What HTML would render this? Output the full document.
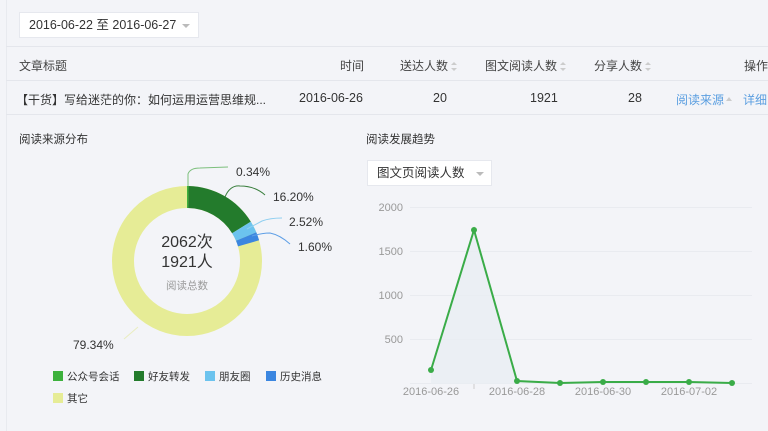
<!DOCTYPE html>
<html><head><meta charset="utf-8"><style>
*{margin:0;padding:0;box-sizing:border-box}
body{width:768px;height:431px;overflow:hidden;background:#f3f4f8;font-family:"Liberation Sans","Noto Sans CJK SC",sans-serif;color:#333;position:relative;font-size:12px}
.abs{position:absolute;white-space:nowrap}
.sel{position:absolute;background:#fff;border:1px solid #e6e8ee;height:26px;line-height:24px;padding-left:9px;font-size:12.5px;color:#333}
.caret{position:absolute;width:0;height:0;border-left:4px solid transparent;border-right:4px solid transparent;border-top:4px solid #bbb}
.line{position:absolute;left:6px;right:0;height:1px;background:#e4e6ec}
.th{color:#444;font-size:12px}
.sort{display:inline-block;vertical-align:middle;margin-left:3px;width:6px;height:9px;position:relative}
.sort:before{content:"";position:absolute;top:0;left:0;border-left:3px solid transparent;border-right:3px solid transparent;border-bottom:3px solid #ccc}
.sort:after{content:"";position:absolute;bottom:0;left:0;border-left:3px solid transparent;border-right:3px solid transparent;border-top:3px solid #ccc}
</style></head><body>
<div style="position:absolute;left:6px;top:0;width:1px;height:431px;background:#e8eaef"></div>
<div class="sel" style="left:19px;top:12px;width:180px">2016-06-22 至 2016-06-27</div>
<div class="caret" style="left:182px;top:24px"></div>
<div class="line" style="top:46px"></div>
<div class="abs th" style="left:19px;top:57px">文章标题</div>
<div class="abs th" style="left:340px;top:57px">时间</div>
<div class="abs th" style="left:400px;top:57px">送达人数<span class="sort"></span></div>
<div class="abs th" style="left:485px;top:57px">图文阅读人数<span class="sort"></span></div>
<div class="abs th" style="left:594px;top:57px">分享人数<span class="sort"></span></div>
<div class="abs th" style="left:744px;top:57px">操作</div>
<div class="line" style="top:80px"></div>
<div class="abs" style="left:16px;top:91px;font-size:12px">【干货】写给迷茫的你：如何运用运营思维规...</div>
<div class="abs" style="left:299px;top:91px;font-size:12.5px">2016-06-26</div>
<div class="abs" style="left:433px;top:91px;font-size:12.5px">20</div>
<div class="abs" style="left:530px;top:91px;font-size:12.5px">1921</div>
<div class="abs" style="left:628px;top:91px;font-size:12.5px">28</div>
<div class="abs" style="left:676px;top:91px;font-size:12px;color:#5a9ee0">阅读来源</div>
<div class="abs" style="left:726px;top:97px;border-left:3px solid transparent;border-right:3px solid transparent;border-bottom:4px solid #ccc"></div>
<div class="abs" style="left:743px;top:91px;font-size:12px;color:#5a9ee0">详细</div>
<div class="line" style="top:114px"></div>

<div class="abs" style="left:19px;top:131px;font-size:11.5px">阅读来源分布</div>
<div class="abs" style="left:366px;top:131px;font-size:11.5px">阅读发展趋势</div>

<svg style="position:absolute;left:0;top:0" width="768" height="431">
<g transform="translate(187,261)">
<circle r="64" fill="none" stroke="#e6ec96" stroke-width="22"/>
<path d="M0,-75 A75,75 0 0 1 1.6,-75 L1.13,-53 A53,53 0 0 0 0,-53Z" fill="#3db13d"/>
<path d="M1.6,-75 A75,75 0 0 1 63.8,-39.4 L45.1,-27.8 A53,53 0 0 0 1.13,-53Z" fill="#237b2c"/>
<path d="M63.8,-39.4 A75,75 0 0 1 69.3,-28.7 L49,-20.3 A53,53 0 0 0 45.1,-27.8Z" fill="#6cc3ee"/>
<path d="M69.3,-28.7 A75,75 0 0 1 72.1,-20.7 L51,-14.6 A53,53 0 0 0 49,-20.3Z" fill="#3b86e0"/>
</g>
<g fill="none" stroke-width="1">
<path d="M188,186 L188,174 Q190,168 200,168 L228,167" stroke="#7cbf7c"/>
<path d="M225,197 Q230,185 240,186 Q255,186 265,195" stroke="#3a7f3e"/>
<path d="M247,229 L262,221 Q270,218 282,218" stroke="#8fcff0"/>
<path d="M252,236 Q262,233 270,233 Q280,235 290,244" stroke="#5d9ee6"/>
<path d="M124,339 L138,327" stroke="#e9edc0"/>
</g>
<g font-size="12" fill="#333" font-family="Liberation Sans, sans-serif">
<text x="236" y="176">0.34%</text>
<text x="273" y="201">16.20%</text>
<text x="289" y="226">2.52%</text>
<text x="298" y="251">1.60%</text>
<text x="73" y="349">79.34%</text>
</g>
<text x="187" y="247" font-size="16" text-anchor="middle" fill="#333" font-family="Liberation Sans, Noto Sans CJK SC, sans-serif">2062次</text>
<text x="187" y="267" font-size="16" text-anchor="middle" fill="#333" font-family="Liberation Sans, Noto Sans CJK SC, sans-serif">1921人</text>
<text x="187" y="289" font-size="10.5" text-anchor="middle" fill="#999" font-family="Liberation Sans, Noto Sans CJK SC, sans-serif">阅读总数</text>
<g font-size="10.5" fill="#333" font-family="Liberation Sans, Noto Sans CJK SC, sans-serif">
<rect x="53" y="371" width="10" height="10" fill="#3db13d"/><text x="67" y="380">公众号会话</text>
<rect x="134" y="371" width="10" height="10" fill="#237b2c"/><text x="148" y="380">好友转发</text>
<rect x="205" y="371" width="10" height="10" fill="#6cc3ee"/><text x="219" y="380">朋友圈</text>
<rect x="266" y="371" width="10" height="10" fill="#3b86e0"/><text x="280" y="380">历史消息</text>
<rect x="53" y="393" width="10" height="10" fill="#e6ec96"/><text x="67" y="402">其它</text>
</g>

<g stroke="#e9ebf0" stroke-width="1">
<line x1="410" y1="207.5" x2="752" y2="207.5"/>
<line x1="410" y1="251.5" x2="752" y2="251.5"/>
<line x1="410" y1="295.5" x2="752" y2="295.5"/>
<line x1="410" y1="339.5" x2="752" y2="339.5"/>
<line x1="410" y1="383.5" x2="752" y2="383.5"/>
<line x1="474" y1="384" x2="474" y2="389" stroke="#ccc"/>
</g>
<g font-size="11" fill="#999" text-anchor="end" font-family="Liberation Sans, sans-serif">
<text x="403" y="211">2000</text><text x="403" y="255">1500</text><text x="403" y="299">1000</text><text x="403" y="343">500</text>
</g>
<g font-size="11" fill="#999" text-anchor="middle" font-family="Liberation Sans, sans-serif">
<text x="431" y="395">2016-06-26</text><text x="517" y="395">2016-06-28</text><text x="603" y="395">2016-06-30</text><text x="689" y="395">2016-07-02</text>
</g>
<path d="M431,370 L474,230 L517,381 L560,383 L603,382 L646,382 L689,382 L732,383 L732,384 L431,384Z" fill="#e9edf3" opacity="0.8"/>
<polyline points="431,370 474,230 517,381 560,383 603,382 646,382 689,382 732,383" fill="none" stroke="#3aac48" stroke-width="2"/>
<g fill="#3aac48">
<circle cx="431" cy="370" r="3"/><circle cx="474" cy="230" r="3"/><circle cx="517" cy="381" r="3"/><circle cx="560" cy="383" r="3"/><circle cx="603" cy="382" r="3"/><circle cx="646" cy="382" r="3"/><circle cx="689" cy="382" r="3"/><circle cx="732" cy="383" r="3"/>
</g>
</svg>
<div class="sel" style="left:367px;top:160px;width:125px">图文页阅读人数</div>
<div class="caret" style="left:476px;top:172px"></div>
</body></html>
